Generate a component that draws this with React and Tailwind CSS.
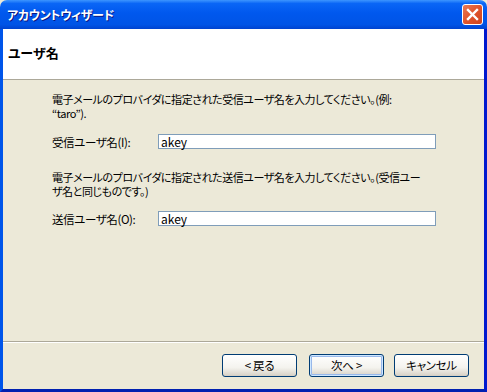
import React from 'react';

const font = "font-['Noto_Sans_CJK_JP','Liberation_Sans',sans-serif] [font-feature-settings:'palt']";

const XpButton = ({ children, isDefault }) => (
  <button
    className={`w-[75px] h-[23px] rounded-[3px] border border-[#003C74] bg-[linear-gradient(to_bottom,#FFFFFF_0%,#F4F3EE_60%,#D6D0C5_100%)] text-[11.5px] tracking-[-0.3px] leading-none text-black flex items-center justify-center ${
      isDefault ? 'shadow-[inset_0_0_0_1px_#CEE7FF,inset_0_0_0_2px_#98B8EA]' : 'shadow-[inset_0_-1px_0_#D6D0C5]'
    }`}
  >
    {children}
  </button>
);

const Field = ({ label, value }) => (
  <div className="flex items-center h-[15px]">
    <span className="w-[106px] text-[11.5px] tracking-[-0.4px] leading-[14px]">{label}</span>
    <div className="w-[278px] h-[15px] border border-[#7F9DB9] bg-white flex items-center pl-[2px] text-[12px] leading-none">
      {value}
    </div>
  </div>
);

export default function App() {
  return (
    <div className={`w-[487px] h-[392px] flex flex-col bg-[#ECE9D8] text-black ${font}`}>
      {/* title bar */}
      <div className="h-[29px] shrink-0 rounded-t-[7px] flex items-center pl-[7px] pr-[4px] bg-[linear-gradient(to_bottom,#3D95FF_0%,#0A66F6_12%,#0058EE_45%,#0054E6_85%,#0043CF_100%)]">
        <span className="text-white font-bold text-[12px] tracking-[-0.3px] leading-none [text-shadow:1px_1px_0_#0A1883]">
          アカウントウィザード
        </span>
        <div className="ml-auto w-[21px] h-[21px] rounded-[3px] border border-white bg-[linear-gradient(135deg,#E97A56_0%,#E0542C_50%,#CC4420_100%)] flex items-center justify-center">
          <svg width="13" height="13" viewBox="0 0 13 13">
            <path d="M2 2 L11 11 M11 2 L2 11" stroke="white" strokeWidth="2.4" strokeLinecap="square" />
          </svg>
        </div>
      </div>

      {/* frame */}
      <div className="flex-1 flex flex-col border-l-[3px] border-r-[3px] border-b-[3px] border-l-[#0055EA] border-r-[#0019CF] border-b-[#0021B0]">
        {/* header */}
        <div className="h-[51px] shrink-0 bg-white border-b border-[#ACA899] pl-[5px] pt-[10px]">
          <span className="font-bold text-[13px] leading-[14px]">ユーザ名</span>
        </div>

        {/* body */}
        <div className="h-[261px] shrink-0 pl-[49px] pt-[12px] flex flex-col">
          <p className="text-[11px] tracking-[-0.45px] leading-[14px]">
            電子メールのプロバイダに指定された受信ユーザ名を入力してください。(例:
            <br />
            “taro”).
          </p>
          <div className="mt-[14px]">
            <Field label="受信ユーザ名(I):" value="akey" />
          </div>
          <p className="mt-[21px] text-[11px] tracking-[-0.45px] leading-[14px]">
            電子メールのプロバイダに指定された送信ユーザ名を入力してください。(受信ユー
            <br />
            ザ名と同じものです。)
          </p>
          <div className="mt-[13px]">
            <Field label="送信ユーザ名(O):" value="akey" />
          </div>
        </div>

        {/* footer */}
        <div className="flex-1 border-t border-[#ACA899]">
          <div className="border-t border-white h-full flex items-start justify-end pr-[15px] pt-[11px]">
            <XpButton>&lt; 戻る</XpButton>
            <div className="ml-[12px]">
              <XpButton isDefault>次へ &gt;</XpButton>
            </div>
            <div className="ml-[10px]">
              <XpButton>キャンセル</XpButton>
            </div>
          </div>
        </div>
      </div>
    </div>
  );
}
